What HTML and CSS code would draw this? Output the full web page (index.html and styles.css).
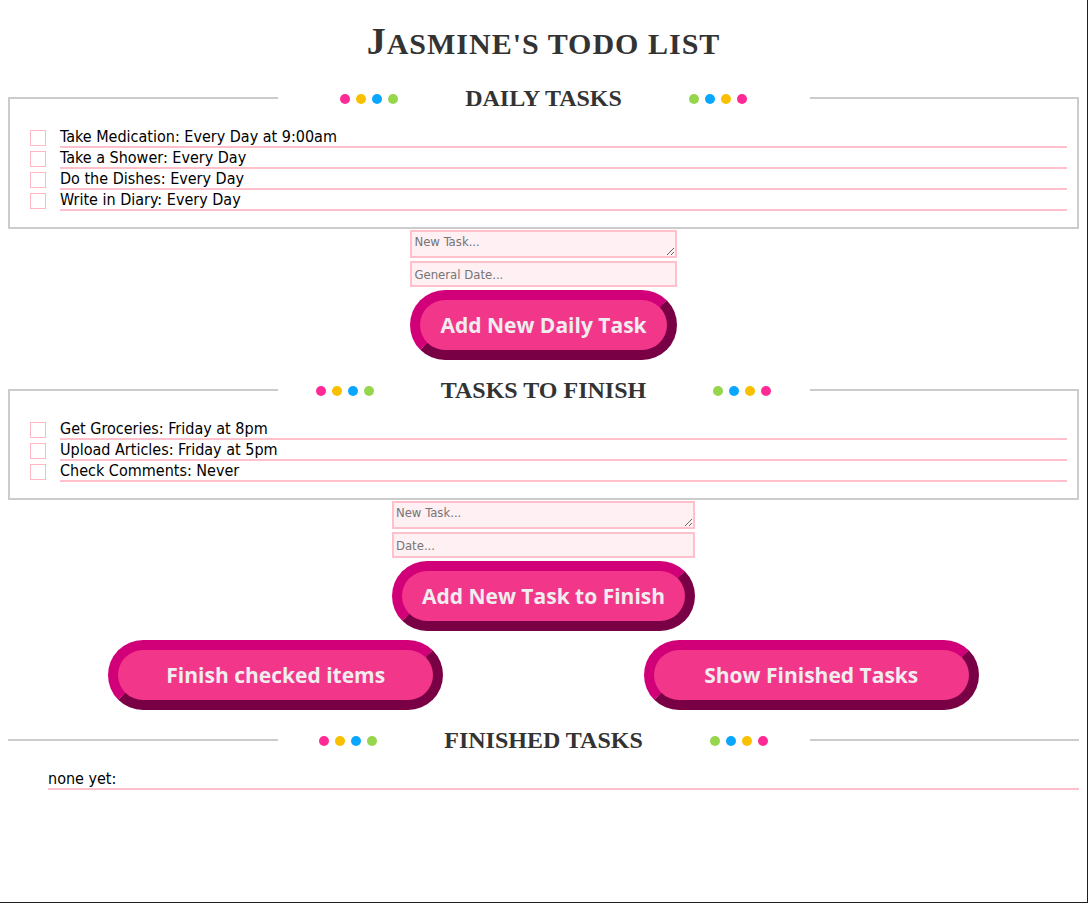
FILE: index.html
```html
<!DOCTYPE html>
<html lang="en">
<head>
<meta charset="utf-8">
<title>Jasmine's Todo List</title>
<link rel="stylesheet" href="styles.css">
</head>
<body>
<div class="frame"></div>
<h1 class="title">Jasmine's todo list</h1>

<fieldset class="group">
  <legend class="group-legend">
    <span class="legend-inner">
      <span class="dots"><i class="dot dot-pink"></i><i class="dot dot-yellow"></i><i class="dot dot-blue"></i><i class="dot dot-green"></i></span>
      <span class="legend-text">Daily Tasks</span>
      <span class="dots"><i class="dot dot-green"></i><i class="dot dot-blue"></i><i class="dot dot-yellow"></i><i class="dot dot-pink"></i></span>
    </span>
  </legend>
  <ul class="tasks">
    <li class="task"><input type="checkbox" class="check"><span class="task-text">Take Medication: Every Day at 9:00am</span></li>
    <li class="task"><input type="checkbox" class="check"><span class="task-text">Take a Shower: Every Day</span></li>
    <li class="task"><input type="checkbox" class="check"><span class="task-text">Do the Dishes: Every Day</span></li>
    <li class="task"><input type="checkbox" class="check"><span class="task-text">Write in Diary: Every Day</span></li>
  </ul>
</fieldset>
<form class="add-form">
  <textarea class="field field-area" placeholder="New Task..."></textarea>
  <input class="field field-line" type="text" placeholder="General Date...">
  <button type="button" class="pill">Add New Daily Task</button>
</form>

<fieldset class="group group-spaced">
  <legend class="group-legend">
    <span class="legend-inner">
      <span class="dots"><i class="dot dot-pink"></i><i class="dot dot-yellow"></i><i class="dot dot-blue"></i><i class="dot dot-green"></i></span>
      <span class="legend-text">Tasks to Finish</span>
      <span class="dots"><i class="dot dot-green"></i><i class="dot dot-blue"></i><i class="dot dot-yellow"></i><i class="dot dot-pink"></i></span>
    </span>
  </legend>
  <ul class="tasks">
    <li class="task"><input type="checkbox" class="check"><span class="task-text">Get Groceries: Friday at 8pm</span></li>
    <li class="task"><input type="checkbox" class="check"><span class="task-text">Upload Articles: Friday at 5pm</span></li>
    <li class="task"><input type="checkbox" class="check"><span class="task-text">Check Comments: Never</span></li>
  </ul>
</fieldset>
<form class="add-form">
  <textarea class="field field-area" placeholder="New Task..."></textarea>
  <input class="field field-line" type="text" placeholder="Date...">
  <button type="button" class="pill">Add New Task to Finish</button>
</form>

<div class="actions">
  <div class="action-half"><button type="button" class="pill pill-wide">Finish checked items</button></div>
  <div class="action-half"><button type="button" class="pill pill-wide">Show Finished Tasks</button></div>
</div>

<fieldset class="group group-spaced group-open">
  <legend class="group-legend">
    <span class="legend-inner">
      <span class="dots"><i class="dot dot-pink"></i><i class="dot dot-yellow"></i><i class="dot dot-blue"></i><i class="dot dot-green"></i></span>
      <span class="legend-text">Finished Tasks</span>
      <span class="dots"><i class="dot dot-green"></i><i class="dot dot-blue"></i><i class="dot dot-yellow"></i><i class="dot dot-pink"></i></span>
    </span>
  </legend>
  <ul class="tasks tasks-done">
    <li class="task"><span class="task-text">none yet:</span></li>
  </ul>
</fieldset>
</body>
</html>
```

FILE: styles.css
```css
html {
  background: #fff;
}

body {
  margin: 8px 9px 8px 8px;
  font-family: "DejaVu Sans Condensed", "DejaVu Sans", Verdana, sans-serif;
  color: #000;
}

.frame {
  position: fixed;
  inset: 0;
  border-right: 1px solid #1e1e1e;
  border-bottom: 1px solid #1e1e1e;
  pointer-events: none;
}

.title {
  height: 40px;
  margin: 13px 0 23px;
  text-align: center;
  font: bold 30px/40px "Liberation Serif", "Times New Roman", serif;
  letter-spacing: 1px;
  text-transform: uppercase;
  color: #333;
}

.title::first-letter {
  font-size: 38px;
}

.group {
  margin: 0;
  padding: 15px 10px 16px;
  border: 2px solid #ccc;
  min-width: 0;
}

.group-spaced {
  margin-top: 16px;
}

.group-open {
  border-width: 2px 0 0 0;
  padding: 15px 0 0 0;
}

.group-legend {
  width: 532px;
  margin: 0 auto;
  padding: 0;
  font: bold 24px/28px "Liberation Serif", "Times New Roman", serif;
  text-transform: uppercase;
  color: #333;
}

.legend-inner {
  display: flex;
  justify-content: center;
  align-items: center;
  gap: 67px;
}

.dots {
  display: flex;
  gap: 6px;
  padding-top: 2px;
}

.dot {
  display: block;
  width: 10px;
  height: 10px;
  border-radius: 50%;
}

.dot-pink { background: #ff2a95; }
.dot-yellow { background: #f8c000; }
.dot-blue { background: #0aa6ff; }
.dot-green { background: #96d64d; }

.tasks {
  list-style: none;
  margin: 0;
  padding: 0 0 0 10px;
}

.tasks-done {
  padding-left: 40px;
}

.task {
  display: flex;
  align-items: center;
  gap: 14px;
}

.check {
  appearance: none;
  -webkit-appearance: none;
  flex: none;
  width: 16px;
  height: 16px;
  margin: 0;
  border: 1px solid #ffb8c6;
  background: #fff;
}

.task-text {
  flex: 1;
  font-size: 16px;
  line-height: 19px;
  height: 19px;
  border-bottom: 2px solid #ffc0cb;
}

.add-form {
  width: fit-content;
  margin: 1px auto 0;
  display: flex;
  flex-direction: column;
  gap: 3px;
}

.field {
  box-sizing: border-box;
  width: 0;
  min-width: 100%;
  margin: 0;
  padding: 2px;
  border: 2px solid #ffc0cb;
  background: #fff0f3;
  font: 13px "DejaVu Sans Condensed", "DejaVu Sans", sans-serif;
  color: #000;
}

.field::placeholder {
  color: #757575;
}

.field-area {
  display: block;
  height: 28px;
  resize: vertical;
}

.field-line {
  height: 26px;
}

.pill {
  box-sizing: border-box;
  height: 70px;
  padding: 0 20px;
  border: 10px solid;
  border-color: #d10079 #7a0046 #7a0046 #d10079;
  border-radius: 35px;
  background: #f2378b;
  color: #f1edef;
  font: bold 21px/30px "Open Sans", "Noto Sans", sans-serif;
  white-space: nowrap;
  cursor: pointer;
}

.pill-wide {
  width: 335px;
}

.actions {
  display: flex;
  margin-top: 9px;
}

.action-half {
  flex: 1;
  display: flex;
  justify-content: center;
}
```
